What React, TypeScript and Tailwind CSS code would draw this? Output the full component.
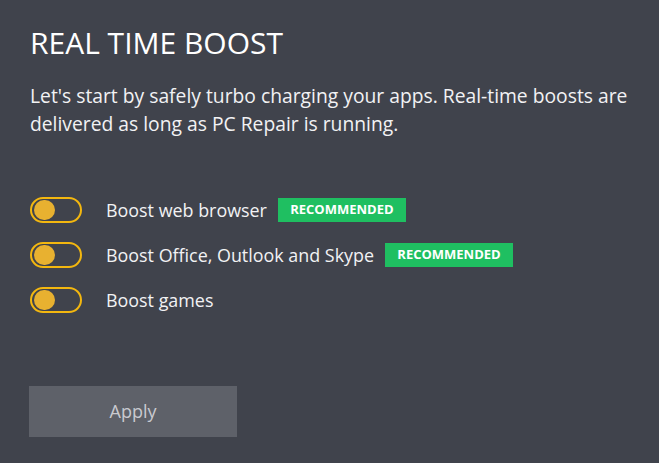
import React from "react";

function Toggle() {
  return (
    <div className="w-[52px] h-[26px] rounded-full border-2 border-[#f3b70f] flex items-center pl-[2px] shrink-0">
      <div className="w-[21px] h-[20px] rounded-full bg-[#e8b130]" />
    </div>
  );
}

function Badge() {
  return (
    <span className="ml-[11px] h-[24px] w-[128px] bg-[#1fbf61] text-white text-[13px] font-bold flex items-center justify-center">
      RECOMMENDED
    </span>
  );
}

function Row({ label, badge }: { label: string; badge?: boolean }) {
  return (
    <div className="flex items-center h-[26px]">
      <Toggle />
      <span className="ml-[24px] text-[17.9px] text-[#f2f2f4]">{label}</span>
      {badge && <Badge />}
    </div>
  );
}

export default function App() {
  return (
    <div
      className="w-[659px] h-[463px] bg-[#40434c] text-white overflow-hidden"
      style={{ fontFamily: '"Open Sans", "Noto Sans", sans-serif' }}
    >
      <div className="pl-[30px] pt-[23px]">
        <h1 className="text-[30px] leading-[40px] font-normal text-white">REAL TIME BOOST</h1>
        <p className="mt-[19px] text-[19.3px] leading-[28px] text-[#f2f2f4] w-[620px]">
          Let's start by safely turbo charging your apps. Real-time boosts are delivered as long as PC Repair is running.
        </p>
        <div className="mt-[59px] flex flex-col gap-[19px]">
          <Row label="Boost web browser" badge />
          <Row label="Boost Office, Outlook and Skype" badge />
          <Row label="Boost games" />
        </div>
        <button className="mt-[73px] -ml-[1px] w-[208px] h-[51px] bg-[#5e6169] text-[#c9cad0] text-[18px] flex items-center justify-center">
          Apply
        </button>
      </div>
    </div>
  );
}
